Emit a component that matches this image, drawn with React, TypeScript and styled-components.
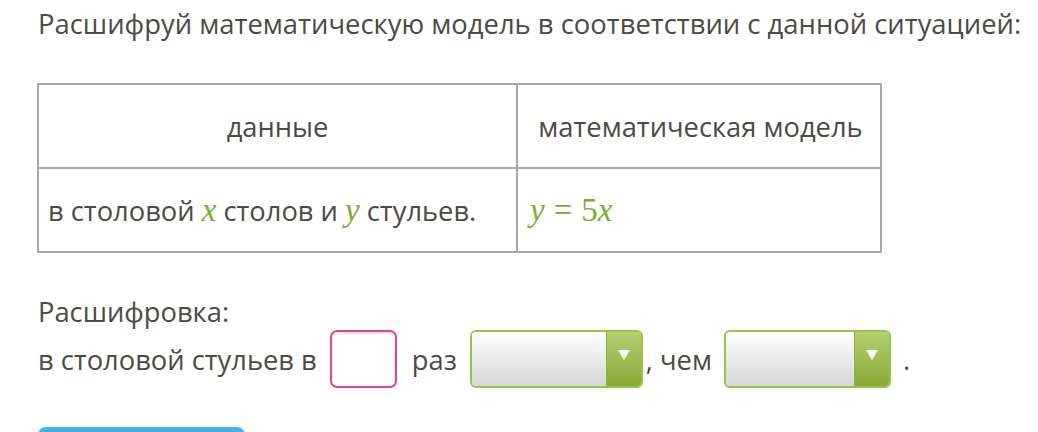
import {FC} from "react";
import styled, {createGlobalStyle} from "styled-components";

const GlobalStyle = createGlobalStyle`
  html, body {
    margin: 0;
    padding: 0;
    background: #fff;
  }
  body {
    font-family: "Open Sans", "Noto Sans", sans-serif;
    color: #4b4b43;
  }
`;

const Page = styled.div`
  padding: 6px 0 0 38px;
  width: 1000px;
`;

const Title = styled.div`
  font-size: 27.4px;
  line-height: 36px;
  white-space: nowrap;
`;

const Table = styled.table`
  margin-top: 41px;
  border-collapse: collapse;
  font-size: 27.3px;
  width: 845px;
  margin-left: -1px;
`;

const Cell = styled.td<{head?: boolean; wide?: boolean}>`
  border: 2px solid #a8a8a8;
  height: 82px;
  padding: 0 9px 0 ${({wide}) => wide ? 9 : 12}px;
  text-align: ${({head}) => head ? 'center' : 'left'};
  width: ${({wide}) => wide ? '459px' : 'auto'};
  white-space: nowrap;
`;

const MathVar = styled.span<{upright?: boolean}>`
  font-family: "Liberation Serif", "DejaVu Serif", serif;
  font-style: ${({upright}) => upright ? 'normal' : 'italic'};
  font-size: 33px;
  color: #7aae2c;
`;

const MathSign = styled.span`
  font-family: "Liberation Serif", "DejaVu Serif", serif;
  font-size: 33px;
  color: #7aae2c;
  padding: 0 9px;
`;

const Label = styled.div`
  margin-top: 41px;
  font-size: 27.3px;
  line-height: 36px;
`;

const Line = styled.div`
  display: flex;
  align-items: center;
  font-size: 27.3px;
  height: 58px;
`;

const Word = styled.span<{left?: number; right?: number}>`
  margin-left: ${({left}) => left ?? 0}px;
  margin-right: ${({right}) => right ?? 0}px;
  white-space: nowrap;
`;

const NumberBox = styled.div`
  box-sizing: border-box;
  width: 67px;
  height: 58px;
  border: 2px solid #e0448f;
  border-radius: 7px;
  background: #fff;
  box-shadow: inset 0 2px 2px rgba(0,0,0,0.12);
`;

const Select = styled.div<{w: number}>`
  box-sizing: border-box;
  display: flex;
  width: ${({w}) => w}px;
  height: 58px;
  border: 2px solid #9cc24d;
  border-radius: 6px;
  overflow: hidden;
`;

const SelectBody = styled.div`
  flex: 1;
  background: linear-gradient(#ffffff, #d6d6d6);
`;

const SelectArrow = styled.div`
  width: 34px;
  display: flex;
  align-items: center;
  justify-content: center;
  background: linear-gradient(#b3cf72, #87aa33);
  border-left: 1px solid #8fb13e;
`;

const Triangle = styled.div`
  width: 0;
  height: 0;
  border-left: 6px solid transparent;
  border-right: 6px solid transparent;
  border-top: 10px solid #fff;
  margin-top: -8px;
`;

const CheckButton = styled.div`
  margin-top: 39px;
  width: 207px;
  height: 30px;
  border-radius: 8px;
  background: #4aaeec;
`;

const Dropdown: FC<{w: number}> = ({w}) => (
  <Select w={w}>
    <SelectBody/>
    <SelectArrow><Triangle/></SelectArrow>
  </Select>
);

const App: FC = () => {
  return (
    <>
      <GlobalStyle/>
      <Page>
        <Title>Расшифруй математическую модель в соответствии с данной ситуацией:</Title>
        <Table>
          <tbody>
            <tr>
              <Cell head wide>данные</Cell>
              <Cell head>математическая модель</Cell>
            </tr>
            <tr>
              <Cell wide>
                в столовой <MathVar>x</MathVar> столов и <MathVar>y</MathVar> стульев.
              </Cell>
              <Cell>
                <MathVar>y</MathVar><MathSign>=</MathSign><MathVar upright>5</MathVar><MathVar>x</MathVar>
              </Cell>
            </tr>
          </tbody>
        </Table>
        <Label>Расшифровка:</Label>
        <Line>
          <Word right={13}>в столовой стульев в</Word>
          <NumberBox/>
          <Word left={15} right={13}>раз</Word>
          <Dropdown w={173}/>
          <Word left={3} right={12}>, чем</Word>
          <Dropdown w={167}/>
          <Word left={12}>.</Word>
        </Line>
        <CheckButton/>
      </Page>
    </>
  );
};

export default App;
